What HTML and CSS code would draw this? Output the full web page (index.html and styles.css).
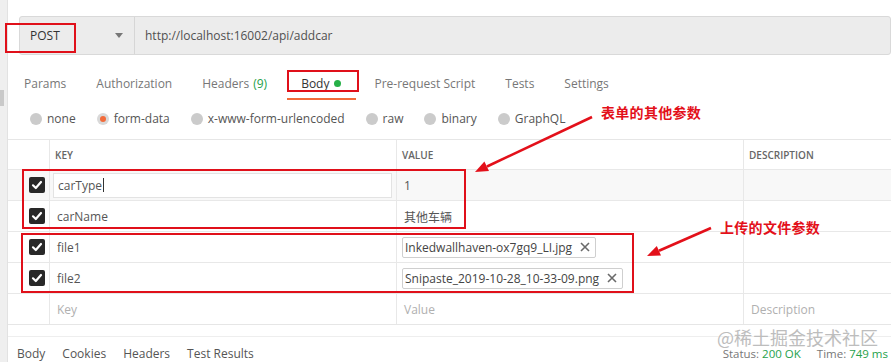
FILE: index.html
```html
<!DOCTYPE html>
<html>
<head>
<meta charset="utf-8">
<link rel="stylesheet" href="styles.css">
</head>
<body>
<div class="app">
  <div class="sidebar"><div class="thumb"></div></div>
  <div class="main">
    <div class="urlbar">
      <div class="method"><span class="method-name">POST</span><span class="caret"></span></div>
      <div class="url">http://localhost:16002/api/addcar</div>
    </div>
    <div class="tabs">
      <div class="tab">Params</div>
      <div class="tab">Authorization</div>
      <div class="tab">Headers <span class="green">(9)</span></div>
      <div class="tab active">Body <span class="dot"></span></div>
      <div class="tab">Pre-request Script</div>
      <div class="tab">Tests</div>
      <div class="tab">Settings</div>
    </div>
    <div class="radios">
      <div class="radio"><span class="circle"></span>none</div>
      <div class="radio"><span class="circle on"></span>form-data</div>
      <div class="radio"><span class="circle"></span>x-www-form-urlencoded</div>
      <div class="radio"><span class="circle"></span>raw</div>
      <div class="radio"><span class="circle"></span>binary</div>
      <div class="radio"><span class="circle"></span>GraphQL</div>
    </div>
    <div class="table">
      <div class="row head">
        <div class="cell chk"></div>
        <div class="cell col">KEY</div>
        <div class="cell col">VALUE</div>
        <div class="cell col">DESCRIPTION</div>
      </div>
      <div class="row focus">
        <div class="cell chk"><span class="cb"><svg width="16" height="16" viewBox="0 0 16 16"><path d="M4 8.3 L6.8 11 L12 5" fill="none" stroke="#fff" stroke-width="2.2" stroke-linecap="round" stroke-linejoin="round"/></svg></span></div>
        <div class="cell col edit"><div class="input">carType<span class="cursor"></span></div></div>
        <div class="cell col val">1</div>
        <div class="cell col"></div>
      </div>
      <div class="row">
        <div class="cell chk"><span class="cb"><svg width="16" height="16" viewBox="0 0 16 16"><path d="M4 8.3 L6.8 11 L12 5" fill="none" stroke="#fff" stroke-width="2.2" stroke-linecap="round" stroke-linejoin="round"/></svg></span></div>
        <div class="cell col key">carName</div>
        <div class="cell col val cjk">其他车辆</div>
        <div class="cell col"></div>
      </div>
      <div class="row">
        <div class="cell chk"><span class="cb"><svg width="16" height="16" viewBox="0 0 16 16"><path d="M4 8.3 L6.8 11 L12 5" fill="none" stroke="#fff" stroke-width="2.2" stroke-linecap="round" stroke-linejoin="round"/></svg></span></div>
        <div class="cell col key">file1</div>
        <div class="cell col file"><span class="chip">Inkedwallhaven-ox7gq9_LI.jpg<svg class="x" width="10" height="10" viewBox="0 0 10 10"><path d="M1 1 L9 9 M9 1 L1 9" stroke="#6a6a6a" stroke-width="1.6"/></svg></span></div>
        <div class="cell col"></div>
      </div>
      <div class="row">
        <div class="cell chk"><span class="cb"><svg width="16" height="16" viewBox="0 0 16 16"><path d="M4 8.3 L6.8 11 L12 5" fill="none" stroke="#fff" stroke-width="2.2" stroke-linecap="round" stroke-linejoin="round"/></svg></span></div>
        <div class="cell col key">file2</div>
        <div class="cell col file"><span class="chip">Snipaste_2019-10-28_10-33-09.png<svg class="x" width="10" height="10" viewBox="0 0 10 10"><path d="M1 1 L9 9 M9 1 L1 9" stroke="#6a6a6a" stroke-width="1.6"/></svg></span></div>
        <div class="cell col"></div>
      </div>
      <div class="row">
        <div class="cell chk"></div>
        <div class="cell col key ph">Key</div>
        <div class="cell col val ph">Value</div>
        <div class="cell col desc ph">Description</div>
      </div>
    </div>
    <div class="gap"></div>
    <div class="resp">
      <div class="resp-tabs">
        <span>Body</span><span>Cookies</span><span>Headers</span><span>Test Results</span>
      </div>
      <div class="status">
        <span>Status: <span class="green">200 OK</span></span>
        <span>Time: <span class="green">749 ms</span></span>
      </div>
    </div>
  </div>

  <div class="redbox box-post"></div>
  <div class="redbox box-body"></div>
  <div class="redbox box-form"></div>
  <div class="redbox box-file"></div>
  <svg class="arrows" width="891" height="362" viewBox="0 0 891 362">
    <line x1="592" y1="117" x2="487" y2="166.5" stroke="#e3101a" stroke-width="2.6"/>
    <polygon points="475,172 489,171 484.4,161.6" fill="#e3101a"/>
    <line x1="711" y1="228" x2="659" y2="250.7" stroke="#e3101a" stroke-width="2.6"/>
    <polygon points="647,256 661,255.5 656.8,245.9" fill="#e3101a"/>
  </svg>
  <div class="note note1">表单的其他参数</div>
  <div class="note note2">上传的文件参数</div>
  <div class="watermark">@稀土掘金技术社区</div>
</div>
</body>
</html>
```

FILE: styles.css
```css
html, body {
  margin: 0;
  padding: 0;
  background: #fff;
}
.app {
  position: relative;
  width: 891px;
  height: 362px;
  overflow: hidden;
  display: flex;
  font-family: "Open Sans", "Noto Sans", "Noto Sans CJK SC", sans-serif;
  font-size: 12px;
  color: #505050;
}
.sidebar {
  width: 7px;
  flex: none;
  background: #efefef;
  border-right: 1px solid #e2e2e2;
  padding-top: 90px;
}
.thumb {
  width: 4px;
  height: 16px;
  background: #c9c9c9;
}
.main {
  flex: 1;
  display: flex;
  flex-direction: column;
  min-width: 0;
}
.urlbar {
  margin: 16px 0 0 11px;
  height: 39px;
  box-sizing: border-box;
  border: 1px solid #d9d9d9;
  border-radius: 3px;
  background: #ececec;
  display: flex;
  align-items: center;
}
.method {
  width: 115px;
  height: 100%;
  box-sizing: border-box;
  border-right: 1px solid #d6d6d6;
  display: flex;
  align-items: center;
  padding-left: 10px;
  color: #333;
}
.method-name {
  flex: 1;
  font-size: 12px;
}
.caret {
  width: 0;
  height: 0;
  border-left: 4px solid transparent;
  border-right: 4px solid transparent;
  border-top: 5px solid #777;
  margin-right: 11px;
}
.url {
  padding-left: 10px;
  color: #505050;
}
.tabs {
  display: flex;
  margin-top: 13px;
  height: 30px;
  padding-left: 1px;
}
.tab {
  padding: 2px 15px 0;
  height: 28px;
  line-height: 26px;
  box-sizing: content-box;
  color: #777;
  display: flex;
  align-items: center;
  gap: 4px;
  border-bottom: 2px solid transparent;
}
.tab.active {
  color: #333;
  border-bottom-color: #f26b3a;
  margin-left: 5px;
  margin-right: 3px;
  padding-left: 14px;
}
.green {
  color: #26a14b;
}
.dot {
  width: 7px;
  height: 7px;
  border-radius: 50%;
  background: #26b047;
  margin-left: 1px;
}
.radios {
  display: flex;
  gap: 21px;
  padding-left: 22px;
  height: 42px;
  align-items: center;
  padding-top: 1px;
  box-sizing: border-box;
}
.radio {
  display: flex;
  align-items: center;
  gap: 5px;
  color: #555;
}
.circle {
  width: 12px;
  height: 12px;
  border-radius: 50%;
  background: #cbcbcb;
  box-sizing: border-box;
  display: flex;
  align-items: center;
  justify-content: center;
}
.circle.on::after {
  content: "";
  width: 6px;
  height: 6px;
  border-radius: 50%;
  background: #f26b3a;
}
.circle.on {
  background: #d9d9d9;
}
.table {
  border-top: 1px solid #e6e6e6;
  border-bottom: 1px solid #e6e6e6;
}
.row {
  display: grid;
  grid-template-columns: 41px 347px 347px 1fr;
  height: 31px;
  border-bottom: 1px solid #e8e8e8;
  box-sizing: border-box;
}
.row:last-child {
  border-bottom: none;
  height: 30px;
}
.row.head {
  height: 30px;
}
.row.focus {
  background: #f8f8f8;
}
.cell {
  display: flex;
  align-items: center;
  min-width: 0;
}
.col {
  border-left: 1px solid #e8e8e8;
  padding-left: 7px;
}
.head .col {
  font-size: 10px;
  font-weight: 600;
  color: #666;
  padding-left: 5px;
}
.chk {
  padding-left: 21px;
}
.cb {
  width: 16px;
  height: 16px;
  border-radius: 2px;
  background: #282828;
  display: block;
}
.cb svg {
  display: block;
}
.edit {
  padding-left: 3px;
}
.input {
  width: 339px;
  height: 25px;
  box-sizing: border-box;
  border: 1px solid #e3e3e3;
  background: #fff;
  padding-left: 4px;
  display: flex;
  align-items: center;
  color: #555;
}
.cursor {
  width: 1px;
  height: 14px;
  background: #333;
  margin-left: 1px;
}
.key {
  color: #555;
}
.val {
  color: #555;
}
.cjk {
  font-family: "Noto Sans CJK SC", sans-serif;
  font-size: 12px;
}
.ph {
  color: #b0b0b0;
}
.desc {
  padding-left: 7px;
}
.file {
  padding-left: 5px;
}
.chip {
  height: 21px;
  box-sizing: border-box;
  border: 1px solid #cfcfcf;
  border-radius: 2px;
  padding: 0 5px 0 2px;
  display: flex;
  align-items: center;
  gap: 8px;
  color: #444;
  background: #fff;
}
.chip .x {
  display: block;
}
.gap {
  height: 11px;
  border-bottom: 1px solid #eeeeee;
}
.resp {
  display: flex;
  justify-content: space-between;
  align-items: center;
  padding: 9px 3px 0 9px;
  line-height: 16px;
}
.resp-tabs {
  display: flex;
  gap: 17px;
  color: #555;
}
.status {
  display: flex;
  gap: 16px;
  color: #777;
  font-size: 11.5px;
}
.redbox {
  position: absolute;
  box-sizing: border-box;
  border: 2px solid #e0101a;
}
.box-post { left: 5px; top: 23px; width: 71px; height: 30px; }
.box-body { left: 287px; top: 70px; width: 72px; height: 22px; }
.box-form { left: 22px; top: 169px; width: 444px; height: 60px; }
.box-file { left: 21px; top: 233px; width: 613px; height: 60px; }
.arrows {
  position: absolute;
  left: 0;
  top: 0;
  pointer-events: none;
}
.note {
  position: absolute;
  font-family: "Noto Sans CJK SC", sans-serif;
  font-weight: 700;
  font-size: 14px;
  line-height: 18px;
  color: #e3101a;
  letter-spacing: 0.3px;
}
.note1 { left: 601px; top: 103px; }
.note2 { left: 720px; top: 218px; }
.watermark {
  position: absolute;
  left: 717px;
  top: 326px;
  font-family: "Noto Sans CJK SC", sans-serif;
  font-size: 18px;
  line-height: 22px;
  color: #bdbdbd;
  text-shadow: 0 0 2px #fff;
}
```
